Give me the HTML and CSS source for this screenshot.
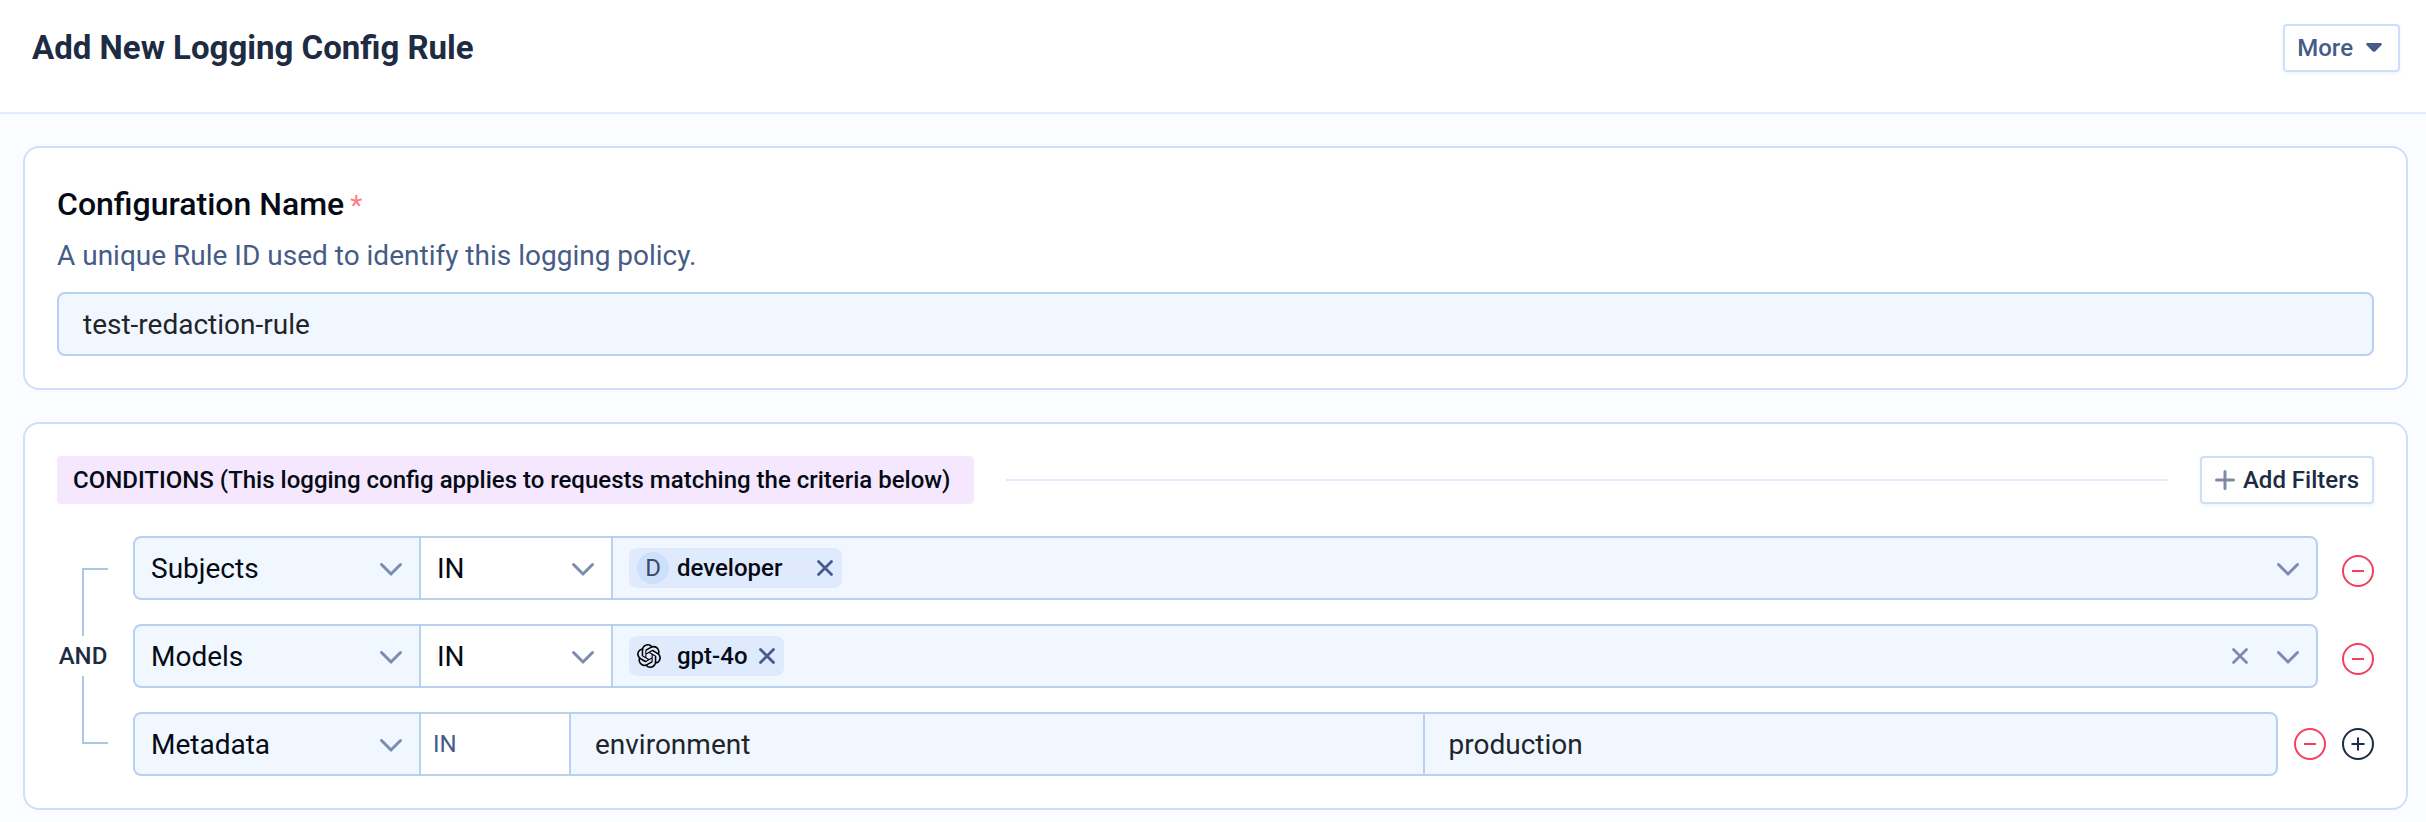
FILE: index.html
```html
<!DOCTYPE html>
<html lang="en">
<head>
  <meta charset="utf-8">
  <meta name="viewport" content="width=device-width, initial-scale=1">
  <title>Add New Logging Config Rule</title>
  <link rel="stylesheet" href="styles.css">
</head>
<body>

<svg class="sprite" aria-hidden="true">
  <symbol id="chevron" viewBox="0 0 24 24"><path d="M2.5 8.5 12 18l9.500-9.500" fill="none" stroke="currentColor" stroke-width="3" stroke-linecap="round"/></symbol>
  <symbol id="cross" viewBox="0 0 18 18"><path d="M2.500 2.500l13 13M15.500 2.500l-13 13" fill="none" stroke="currentColor" stroke-width="2.800" stroke-linecap="round"/></symbol>
  <symbol id="minus-circle" viewBox="0 0 32 32"><path d="M10 16h12" stroke="currentColor" stroke-width="2"/><circle cx="16" cy="16" r="15" fill="none" stroke="currentColor" stroke-width="2"/></symbol>
  <symbol id="plus-circle" viewBox="0 0 32 32"><path d="M9.500 16h13M16 9.500v13" stroke="currentColor" stroke-width="2"/><circle cx="16" cy="16" r="15" fill="none" stroke="currentColor" stroke-width="2"/></symbol>
</svg>

<header class="header">
  <h1>Add New Logging Config Rule</h1>
  <button class="btn btn-more" type="button">More
    <svg width="16" height="10" viewBox="0 0 16 10"><path d="M1.200 0h13.600q1.600.6.700 1.900L9.400 8.200q-1.400 1.300-2.800 0L.5 1.900Q-.4.6 1.200 0z" fill="currentColor"/></svg>
  </button>
</header>

<main class="content">
  <section class="card">
    <label class="card-title" for="rule-name">Configuration Name<span class="required">*</span></label>
    <p class="hint" id="rule-hint">A unique Rule ID used to identify this logging policy.</p>
    <input class="text-input" id="rule-name" type="text" value="test-redaction-rule" aria-describedby="rule-hint">
  </section>

  <section class="card">
    <div class="conditions-head">
      <h2>CONDITIONS (This logging config applies to requests matching the criteria below)</h2>
      <hr>
      <button class="btn btn-add" type="button">
        <svg width="20" height="20" viewBox="0 0 20 20"><path d="M1.500 10h17M10 1.500v17" stroke="#8189a8" stroke-width="3" stroke-linecap="round"/></svg>
        Add Filters
      </button>
    </div>

    <div class="conditions">
      <div class="joiner">
        <span class="bracket bracket-top"></span>
        <span>AND</span>
        <span class="bracket bracket-bottom"></span>
      </div>

      <div class="rows">
        <div class="row">
          <div class="filter">
            <div class="select field">
              <select aria-label="Filter"><option>Subjects</option><option>Models</option><option>Metadata</option></select>
              <svg class="chevron"><use href="#chevron"/></svg>
            </div>
            <div class="select operator">
              <select aria-label="Operator"><option>IN</option><option>NOT IN</option></select>
              <svg class="chevron"><use href="#chevron"/></svg>
            </div>
            <div class="values">
              <span class="chip">
                <span class="avatar">D</span>
                <span class="chip-label subject">developer</span>
                <button class="icon-btn remove" type="button" aria-label="Remove developer"><svg><use href="#cross"/></svg></button>
              </span>
              <button class="icon-btn open" type="button" aria-label="Open"><svg class="chevron"><use href="#chevron"/></svg></button>
            </div>
          </div>
          <div class="actions">
            <button class="icon-btn danger" type="button" aria-label="Remove filter"><svg class="circle"><use href="#minus-circle"/></svg></button>
          </div>
        </div>

        <div class="row">
          <div class="filter">
            <div class="select field">
              <select aria-label="Filter"><option>Models</option><option>Subjects</option><option>Metadata</option></select>
              <svg class="chevron"><use href="#chevron"/></svg>
            </div>
            <div class="select operator">
              <select aria-label="Operator"><option>IN</option><option>NOT IN</option></select>
              <svg class="chevron"><use href="#chevron"/></svg>
            </div>
            <div class="values">
              <span class="chip">
                <span class="logo">
                  <svg width="24" height="24" viewBox="0 0 24 24"><path d="M22.2819 9.8211a5.9847 5.9847 0 0 0-.5157-4.9108 6.0462 6.0462 0 0 0-6.5098-2.9A6.0651 6.0651 0 0 0 4.9807 4.1818a5.9847 5.9847 0 0 0-3.9977 2.9 6.0462 6.0462 0 0 0 .7427 7.0966 5.98 5.98 0 0 0 .511 4.9107 6.051 6.051 0 0 0 6.5146 2.9001A5.9847 5.9847 0 0 0 13.2599 24a6.0557 6.0557 0 0 0 5.7718-4.2058 5.9894 5.9894 0 0 0 3.9977-2.9001 6.0557 6.0557 0 0 0-.7475-7.0729zm-9.022 12.6081a4.4755 4.4755 0 0 1-2.8764-1.0408l.1419-.0804 4.7783-2.7582a.7948.7948 0 0 0 .3927-.6813v-6.7369l2.02 1.1686a.071.071 0 0 1 .038.052v5.5826a4.504 4.504 0 0 1-4.4945 4.4944zm-9.6607-4.1254a4.4708 4.4708 0 0 1-.5346-3.0137l.142.0852 4.783 2.7582a.7712.7712 0 0 0 .7806 0l5.8428-3.3685v2.3324a.0804.0804 0 0 1-.0332.0615L9.74 19.9502a4.4992 4.4992 0 0 1-6.1408-1.6464zM2.3408 7.8956a4.485 4.485 0 0 1 2.3655-1.9728V11.6a.7664.7664 0 0 0 .3879.6765l5.8144 3.3543-2.0201 1.1685a.0757.0757 0 0 1-.071 0l-4.8303-2.7865A4.504 4.504 0 0 1 2.3408 7.872zm16.5963 3.8558L13.1038 8.364 15.1192 7.2a.0757.0757 0 0 1 .071 0l4.8303 2.7913a4.4944 4.4944 0 0 1-.6765 8.1042v-5.6772a.79.79 0 0 0-.407-.667zm2.0107-3.0231l-.142-.0852-4.7735-2.7818a.7759.7759 0 0 0-.7854 0L9.409 9.2297V6.8974a.0662.0662 0 0 1 .0284-.0615l4.8303-2.7866a4.4992 4.4992 0 0 1 6.6802 4.66zM8.3065 12.863l-2.02-1.1638a.0804.0804 0 0 1-.038-.0567V6.0742a4.4992 4.4992 0 0 1 7.3757-3.4537l-.142.0805L8.704 5.459a.7948.7948 0 0 0-.3927.6813zm1.0976-2.3654l2.602-1.4998 2.6069 1.4998v2.9994l-2.5974 1.4997-2.6067-1.4997Z"/></svg>
                </span>
                <span class="chip-label">gpt-4o</span>
                <button class="icon-btn remove" type="button" aria-label="Remove gpt-4o"><svg><use href="#cross"/></svg></button>
              </span>
              <button class="icon-btn clear" type="button" aria-label="Clear all"><svg><use href="#cross"/></svg></button>
              <button class="icon-btn open" type="button" aria-label="Open"><svg class="chevron"><use href="#chevron"/></svg></button>
            </div>
          </div>
          <div class="actions">
            <button class="icon-btn danger" type="button" aria-label="Remove filter"><svg class="circle"><use href="#minus-circle"/></svg></button>
          </div>
        </div>

        <div class="row row-metadata">
          <div class="filter">
            <div class="select field">
              <select aria-label="Filter"><option>Metadata</option><option>Subjects</option><option>Models</option></select>
              <svg class="chevron"><use href="#chevron"/></svg>
            </div>
            <span class="operator-fixed">IN</span>
            <input class="meta-input" type="text" value="environment" aria-label="Metadata key">
            <input class="meta-input" type="text" value="production" aria-label="Metadata value">
          </div>
          <div class="actions">
            <button class="icon-btn danger" type="button" aria-label="Remove filter"><svg class="circle"><use href="#minus-circle"/></svg></button>
            <button class="icon-btn add" type="button" aria-label="Add metadata"><svg class="circle"><use href="#plus-circle"/></svg></button>
          </div>
        </div>
      </div>
    </div>
  </section>
</main>

</body>
</html>
```
FILE: styles.css
```css
* {
  box-sizing: border-box;
}

body {
  margin: 0;
  background: #fbfcff;
  color: #050a14;
  font-family: Roboto, "Liberation Sans", sans-serif;
  font-size: 28px;
}

h1, h2, p {
  margin: 0;
}

button, input, select {
  font: inherit;
  color: inherit;
}

svg {
  display: block;
  flex: none;
}

.sprite {
  position: absolute;
  width: 0;
  height: 0;
}

.header {
  display: flex;
  justify-content: space-between;
  align-items: flex-start;
  padding: 24px 26px 40px 32px;
  background: #fff;
  border-bottom: 2px solid #e0ebfd;
}

.header h1 {
  color: #1d2b43;
  font-size: 33px;
  font-weight: 700;
  line-height: 48px;
}

.btn {
  display: flex;
  align-items: center;
  height: 48px;
  background: #fff;
  border: 2px solid #cce0fb;
  border-radius: 4px;
  box-shadow: 0 2px 4px rgba(30, 44, 70, 0.06);
  color: #1d2b43;
  font-size: 24px;
  font-weight: 500;
  white-space: nowrap;
  cursor: pointer;
}

.btn-more {
  gap: 13px;
  padding: 0 16px 0 12px;
  color: #455c88;
}

.btn-add {
  gap: 8px;
  padding: 0 13px;
}

.content {
  display: grid;
  gap: 32px;
  padding: 32px 18px 12px 23px;
}

.card {
  padding: 32px;
  background: #fff;
  border: 2px solid #cce0fb;
  border-radius: 16px;
}

.card-title {
  display: block;
  font-size: 32px;
  font-weight: 500;
  line-height: 48px;
}

.required {
  margin-left: 6px;
  color: #fb7d8b;
  font-size: 28px;
  font-weight: 400;
  line-height: 1;
}

.hint {
  margin: 8px 0 16px;
  color: #455c88;
  line-height: 40px;
}

.text-input {
  display: block;
  width: 100%;
  height: 64px;
  padding: 0 24px;
  background: #f0f7ff;
  border: 2px solid #b9d1f0;
  border-radius: 8px;
  color: #212529;
}

.conditions-head {
  display: flex;
  align-items: center;
  gap: 32px;
}

.conditions-head h2 {
  padding: 0 24px 0 16px;
  background: #f4e7fe;
  border-radius: 4px;
  font-size: 24px;
  font-weight: 500;
  line-height: 48px;
}

.conditions-head hr {
  flex: 1;
  margin: 0;
  border: 0;
  border-top: 2px solid #e0ebfd;
}

.conditions {
  display: flex;
  gap: 24px;
  margin-top: 32px;
}

/* AND with a bracket that spans the middle of the first and last row */
.joiner {
  display: flex;
  flex-direction: column;
  align-items: center;
  width: 52px;
  padding: 32px 0;
  color: #1d2b43;
  font-size: 24px;
  font-weight: 500;
  line-height: 40px;
}

.bracket {
  flex: 1;
  align-self: flex-start;
  width: 26px;
  margin-left: 25px;
  border-left: 2px solid #abc6e9;
}

.bracket-top {
  border-top: 2px solid #abc6e9;
}

.bracket-bottom {
  border-bottom: 2px solid #abc6e9;
}

.rows {
  display: grid;
  flex: 1;
  gap: 24px;
}

.row {
  display: flex;
  gap: 24px;
}

.filter {
  display: flex;
  flex: 1;
  height: 64px;
  background: #f0f7ff;
  border: 2px solid #b9d1f0;
  border-radius: 8px;
  overflow: hidden;
}

.select {
  display: grid;
  align-items: center;
  border-right: 2px solid #b9d1f0;
}

.select select,
.select svg {
  grid-area: 1 / 1;
}

.select select {
  width: 100%;
  height: 100%;
  padding: 0 48px 0 16px;
  appearance: none;
  background: none;
  border: 0;
}

.select svg {
  justify-self: end;
  margin-right: 16px;
  pointer-events: none;
}

.chevron {
  width: 24px;
  height: 24px;
  color: #7a8cb0;
}

.field {
  width: 286px;
}

.operator {
  width: 192px;
  background: #fff;
}

.operator-fixed {
  width: 150px;
  padding-left: 12px;
  background: #fff;
  border-right: 2px solid #b9d1f0;
  color: #455c88;
  font-size: 24px;
  line-height: 60px;
}

.values {
  display: flex;
  flex: 1;
  align-items: center;
  padding: 0 16px;
}

.chip {
  display: flex;
  align-items: center;
  height: 40px;
  padding: 0 8px;
  background: #e0eafd;
  border-radius: 8px;
  font-size: 24px;
  font-weight: 500;
}

.avatar, .logo {
  width: 32px;
  margin-right: 8px;
}

.avatar {
  background: #cce0fa;
  border-radius: 50%;
  color: #3a4a68;
  font-weight: 400;
  line-height: 32px;
  text-align: center;
}

.subject {
  margin-right: 24px;
}

.icon-btn {
  padding: 0;
  background: none;
  border: 0;
  cursor: pointer;
}

.remove {
  margin-left: 10px;
  color: #455c88;
}

.remove svg, .clear svg {
  width: 18px;
  height: 18px;
}

.open, .clear {
  margin-left: auto;
}

.clear {
  color: #7a8cb0;
}

.clear + .open {
  margin-left: 27px;
}

.actions {
  display: flex;
  align-items: center;
  gap: 16px;
  padding-top: 6px;
}

.row-metadata {
  gap: 16px;
}

.row-metadata .actions {
  padding-top: 0;
}

.circle {
  width: 32px;
  height: 32px;
}

.danger {
  color: #f43f5e;
}

.add {
  color: #1d2b43;
}

.meta-input {
  flex: 1;
  min-width: 0;
  padding: 0 24px;
  background: none;
  border: 0;
  color: #212529;
}

.meta-input + .meta-input {
  border-left: 2px solid #b9d1f0;
}
```
